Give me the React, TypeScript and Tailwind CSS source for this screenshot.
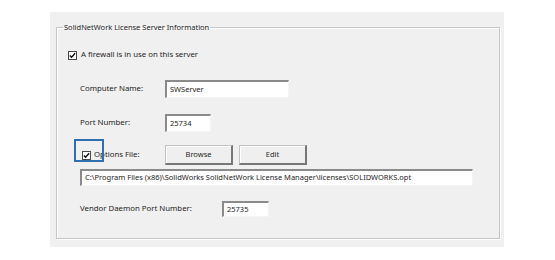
import React from 'react';

const font = { fontFamily: '"Noto Sans", "Open Sans", sans-serif' };

const CheckBox: React.FC = () => (
  <span className="flex h-[9px] w-[9px] items-center justify-center border border-[#4a4a4a] bg-white">
    <svg viewBox="0 0 8 8" className="h-[7px] w-[7px]">
      <path d="M1 4 L3 6 L7 1.5" fill="none" stroke="#111" strokeWidth="1.6" />
    </svg>
  </span>
);

const TextBox: React.FC<{ value: string; className?: string }> = ({ value, className = '' }) => (
  <div
    className={`flex items-center border-l-2 border-t-2 border-b border-r border-l-[#8a8a8a] border-t-[#8a8a8a] border-b-[#f4f4f4] border-r-[#f4f4f4] bg-white pl-[3px] text-[7.5px] text-[#1e1e1e] ${className}`}
  >
    {value}
  </div>
);

const WinButton: React.FC<{ label: string }> = ({ label }) => (
  <div className="flex h-[20px] w-[68px] items-center justify-center border border-[#c2c2c2] border-b-2 border-r-2 border-b-[#777] border-r-[#777] bg-[#efefef] text-[7.5px] text-[#1e1e1e] shadow-[inset_1px_1px_0_#fff]">
    {label}
  </div>
);

export default function App() {
  return (
    <div className="h-[260px] w-[555px] bg-white pl-[50px] pt-[12px]" style={font}>
      <div className="h-[235px] w-[454px] bg-[#f0f0f0] pl-[6px] pt-[10px]">
        <fieldset className="h-[217px] w-[444px] border border-[#c6c6c6] shadow-[inset_1px_1px_0_#fff,1px_1px_0_#fff]">
          <legend className="ml-[6px] px-[1px] text-[7.5px] leading-[10px] text-[#1e1e1e]">
            SolidNetWork License Server Information
          </legend>

          <div className="relative text-[7.8px] text-[#1e1e1e]">
            <div className="ml-[11px] mt-[18px] flex h-[10px] items-center gap-[4px]">
              <CheckBox />
              <span>A firewall is in use on this server</span>
            </div>

            <div className="ml-[23px] mt-[20px] flex items-center">
              <span className="w-[85px]">Computer Name:</span>
              <TextBox value="SWServer" className="h-[18px] w-[124px]" />
            </div>

            <div className="ml-[23px] mt-[16px] flex items-center">
              <span className="w-[85px]">Port Number:</span>
              <TextBox value="25734" className="h-[18px] w-[46px]" />
            </div>

            <div className="ml-[25px] mt-[13px] flex items-center">
              <CheckBox />
              <span className="ml-[3px] w-[71px]">Options File:</span>
              <WinButton label="Browse" />
              <div className="ml-[6px]">
                <WinButton label="Edit" />
              </div>
              <div className="absolute left-[17px] top-[89px] h-[23px] w-[30px] border-2 border-[#2f6fae]" />
            </div>

            <TextBox
              value="C:\Program Files (x86)\SolidWorks SolidNetWork License Manager\licenses\SOLIDWORKS.opt"
              className="ml-[23px] mt-[4px] h-[17px] w-[393px]"
            />

            <div className="ml-[23px] mt-[15px] flex items-center">
              <span className="w-[142px]">Vendor Daemon Port Number:</span>
              <TextBox value="25735" className="h-[16px] w-[47px]" />
            </div>
          </div>
        </fieldset>
      </div>
    </div>
  );
}
